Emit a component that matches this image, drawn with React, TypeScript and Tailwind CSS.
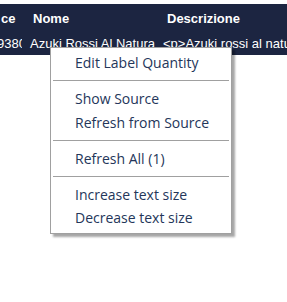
export default function App() {
  const groups = [
    ['Edit Label Quantity'],
    ['Show Source', 'Refresh from Source'],
    ['Refresh All (1)'],
    ['Increase text size', 'Decrease text size'],
  ];

  return (
    <div className="relative w-[287px] h-[302px] bg-white overflow-hidden">
      {/* grid header + selected row */}
      <div className="mt-[4px] bg-[#1c2541] text-white text-[13px] font-['Liberation_Sans',Arial,sans-serif]">
        <div className="flex h-[29px] items-center font-bold">
          <div className="w-[26px] shrink-0 overflow-hidden whitespace-nowrap pl-[1px]">ce</div>
          <div className="w-[133px] shrink-0 overflow-hidden whitespace-nowrap pl-[7px]">Nome</div>
          <div className="flex-1 overflow-hidden whitespace-nowrap pl-[8px]">Descrizione</div>
        </div>
        <div className="flex h-[22px] items-center">
          <div className="w-[22px] shrink-0 overflow-hidden whitespace-nowrap">
            <span className="ml-[-3px] block">9380</span>
          </div>
          <div className="w-[136px] shrink-0 overflow-hidden whitespace-nowrap pl-[8px] mr-[5px]">Azuki Rossi Al Natura</div>
          <div className="flex-1 overflow-hidden whitespace-nowrap">&lt;p&gt;Azuki rossi al naturale</div>
        </div>
      </div>

      {/* context menu */}
      <div className="absolute left-[50px] top-[47px] w-[182px] border border-[#a0a0a0] bg-white py-[3px] shadow-[3px_3px_2px_rgba(0,0,0,0.35)] font-['Segoe_UI','Open_Sans',sans-serif] text-[14px] text-[#24365a]">
        {groups.map((g, gi) => (
          <div key={gi}>
            {gi > 0 && <div className="mx-[2px] my-[5.75px] h-px bg-[#a0a0a0]" />}
            {g.map((label) => (
              <div key={label} className="flex h-[23.5px] items-center pl-[24px] whitespace-nowrap">
                {label}
              </div>
            ))}
          </div>
        ))}
      </div>
    </div>
  );
}
